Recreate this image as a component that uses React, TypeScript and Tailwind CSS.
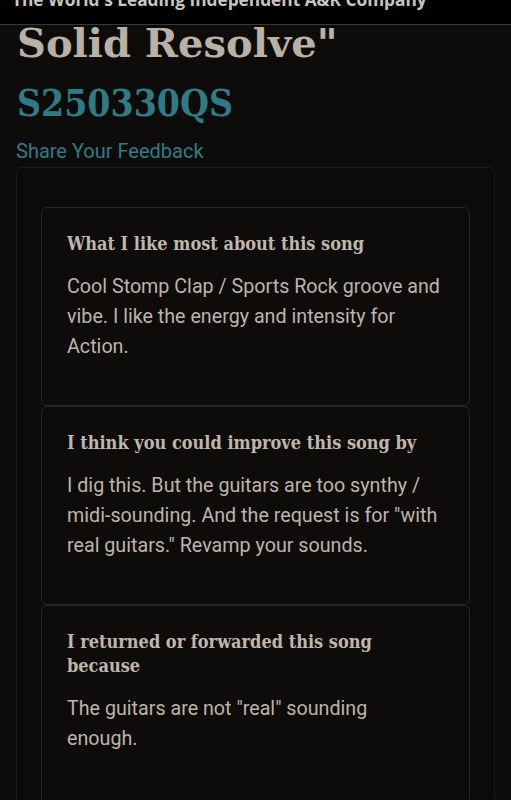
const feedback = [
  {
    title: "What I like most about this song",
    body: "Cool Stomp Clap / Sports Rock groove and vibe. I like the energy and intensity for Action.",
  },
  {
    title: "I think you could improve this song by",
    body: 'I dig this. But the guitars are too synthy / midi-sounding. And the request is for "with real guitars." Revamp your sounds.',
  },
  {
    title: "I returned or forwarded this song because",
    body: 'The guitars are not "real" sounding enough.',
  },
];

const slab = "font-['DejaVu_Serif','Liberation_Serif',serif]";

export default function App() {
  return (
    <div className="relative min-h-screen bg-[#0e0c0b] font-['Roboto',sans-serif]">
      <header className="fixed inset-x-0 top-0 z-10 h-[25px] overflow-hidden border-b border-[#3a3836] bg-black">
        <p className="-mt-[12px] whitespace-nowrap pl-[12px] font-['Open_Sans',sans-serif] text-[17.3px] font-bold leading-[24px] text-[#c9c6c2]">
          The World's Leading Independent A&amp;R Company
        </p>
      </header>

      <main className="px-[16px] pt-[19px] pb-10">
        <h1 className={`${slab} pl-px text-[40px] font-bold leading-[48px] text-[#b9b0a6]`}>
          Solid Resolve"
        </h1>
        <h2 className={`${slab} mt-[12px] pl-px text-[37px] font-bold leading-[48px] font-stretch-condensed text-[#2e7b84]`}>
          S250330QS
        </h2>
        <p className="mt-[10px] text-[20px] leading-[28px] text-[#2f7c85]">
          Share Your Feedback
        </p>

        <section className="mt-[2px] rounded-md border border-[#1f1c1a] bg-[#0d0b0a] px-[24px] pt-[39px]">
          {feedback.map((item) => (
            <div
              key={item.title}
              className="h-[199px] rounded-md border border-[#282523] bg-[#0e0c0b] pl-[25px] pr-[27px] pt-[24px]"
            >
              <h3 className={`${slab} text-[18px] font-bold leading-[24px] font-stretch-condensed text-[#c0b6ab]`}>
                {item.title}
              </h3>
              <p className="mt-[16px] text-[19.7px] leading-[30px] text-[#bdb4aa]">
                {item.body}
              </p>
            </div>
          ))}
        </section>
      </main>
    </div>
  );
}
